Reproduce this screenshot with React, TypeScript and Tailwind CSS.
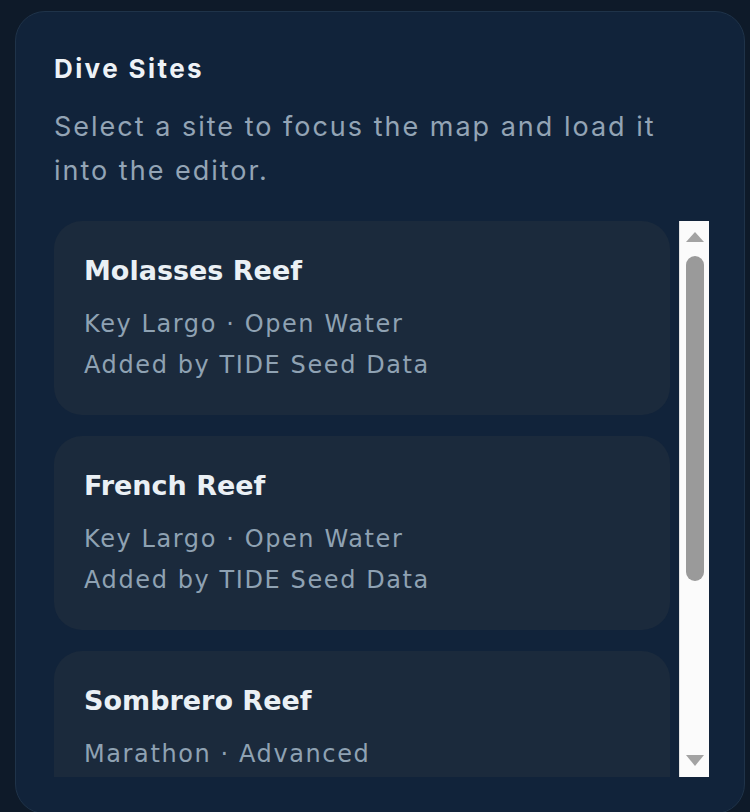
import React from "react";

const sites = [
  { name: "Molasses Reef", meta: "Key Largo · Open Water", by: "Added by TIDE Seed Data" },
  { name: "French Reef", meta: "Key Largo · Open Water", by: "Added by TIDE Seed Data" },
  { name: "Sombrero Reef", meta: "Marathon · Advanced", by: "Added by TIDE Seed Data" },
];

export default function App() {
  return (
    <div
      className="w-[750px] h-[812px] overflow-hidden bg-[#0e1a29] pl-[15px] pr-[5px] pt-[11px]"
      style={{ fontFamily: "Inter, 'Noto Sans', sans-serif" }}
    >
      <div className="h-[803px] rounded-[30px] border border-[#1f3349] bg-[#11233a] pl-[38px] pr-[35px] pt-[41px]">
        <h2 className="text-[26px] leading-[32px] font-bold tracking-[2.4px] text-[#eef2f6]">Dive Sites</h2>
        <p className="mt-[20px] text-[27px] leading-[44px] tracking-[2px] text-[#93a4b5]">
          Select a site to focus the map and load it into the editor.
        </p>
        <div className="mt-[28px] flex h-[556px] gap-[9px]">
          <div
            className="flex-1 overflow-hidden flex flex-col gap-[21px]"
            style={{ fontFamily: "'DejaVu Sans', Inter, sans-serif" }}
          >
            {sites.map((s) => (
              <div
                key={s.name}
                className="shrink-0 rounded-[28px] bg-[#1b2a3c] pl-[30px] pr-[20px] pt-[33px] pb-[29px]"
              >
                <div className="text-[27px] leading-[34px] font-bold text-[#eaf0f5]">{s.name}</div>
                <div className="mt-[16px] text-[24px] leading-[41px] tracking-[1.6px] text-[#8fa2b3]">
                  <div>{s.meta}</div>
                  <div>{s.by}</div>
                </div>
              </div>
            ))}
          </div>
          <div className="w-[30px] shrink-0 bg-[#fbfbfb] border-l border-[#e2e2e2] flex flex-col items-center">
            <svg width="18" height="10" viewBox="0 0 18 10" className="mt-[11px]">
              <polygon points="9,0 18,10 0,10" fill="#a3a3a3" />
            </svg>
            <div className="mt-[14px] w-[18px] h-[325px] rounded-full bg-[#9a9a9a]" />
            <div className="flex-1" />
            <svg width="18" height="11" viewBox="0 0 18 11" className="mb-[11px]">
              <polygon points="0,0 18,0 9,11" fill="#a3a3a3" />
            </svg>
          </div>
        </div>
      </div>
    </div>
  );
}
